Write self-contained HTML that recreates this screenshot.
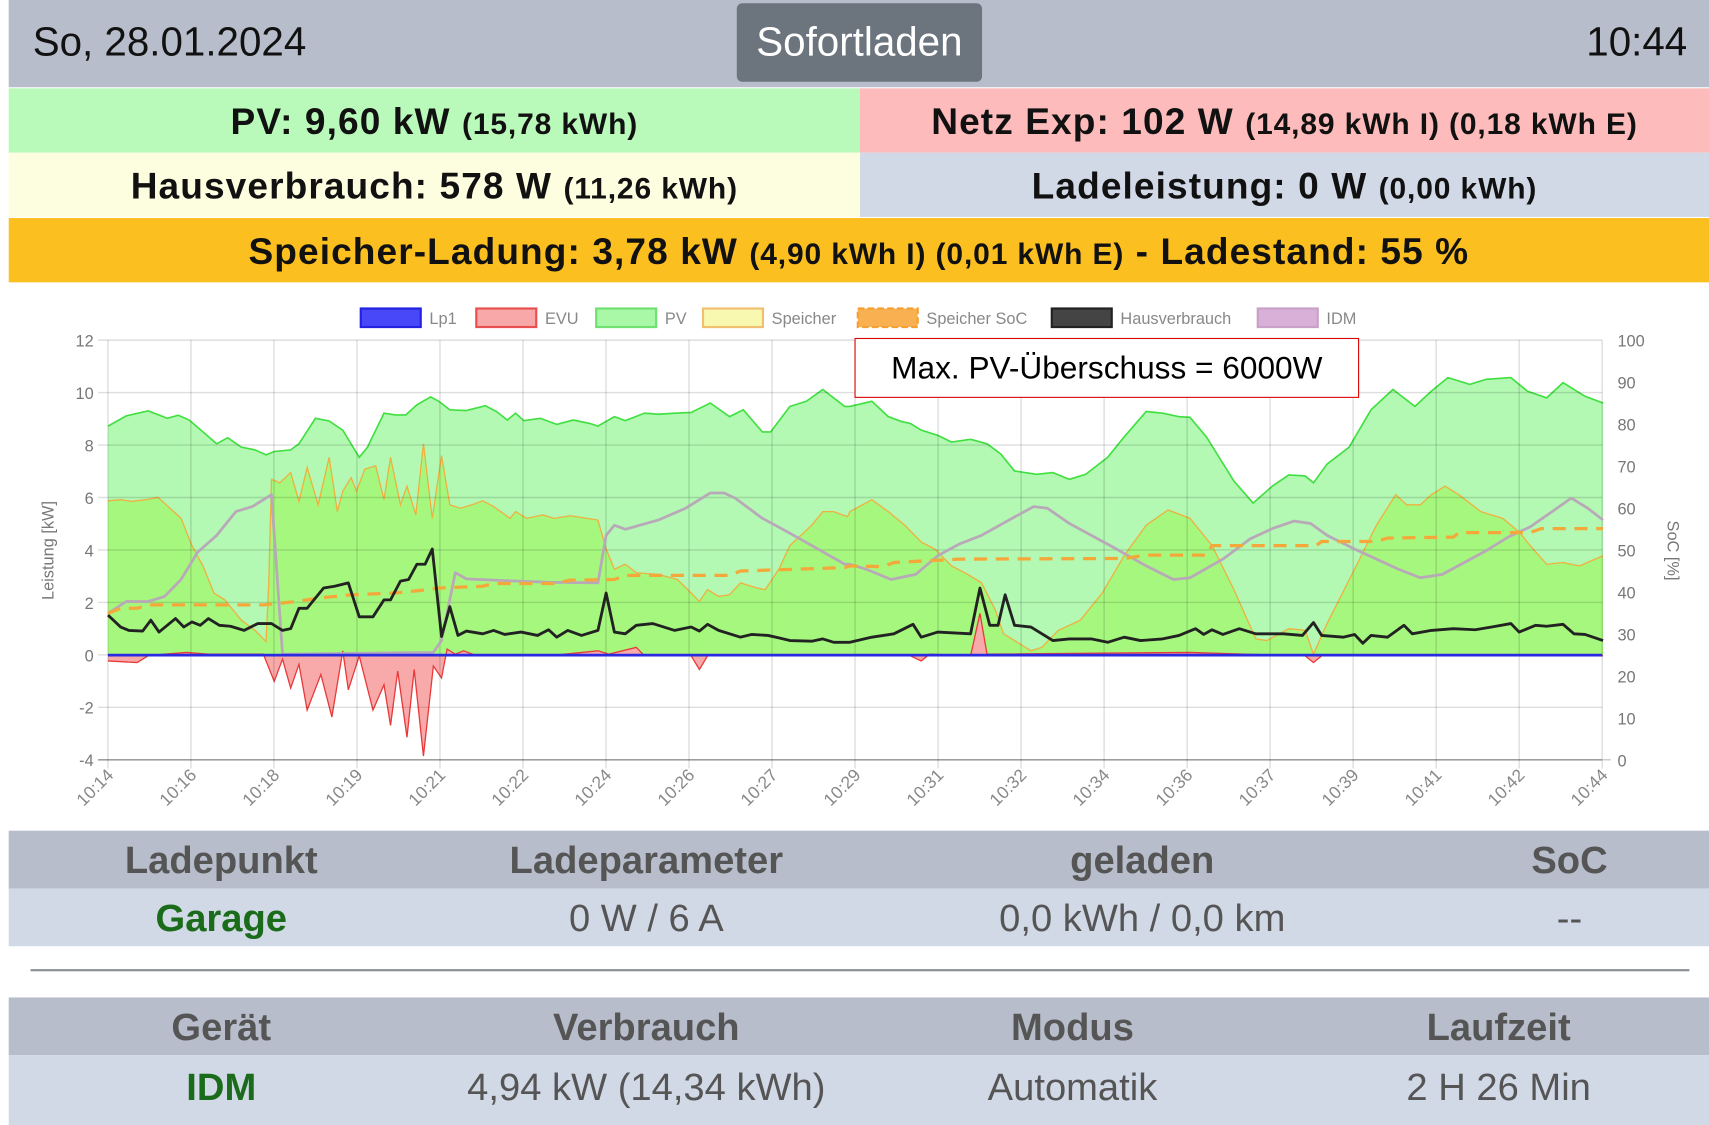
<!DOCTYPE html>
<html><head><meta charset="utf-8"><style>
html,body{margin:0;padding:0;background:#fff;overflow:hidden;width:1709px;height:1125px}
#w{position:absolute;left:0;top:0;width:1568px;height:1032px;transform:scale(1.08993,1.09012);transform-origin:0 0;font-family:"Liberation Sans",sans-serif}
.a{position:absolute}
.hdr{left:8px;top:0;width:1560px;height:80px;background:#b7bdca}
.date{left:30px;top:18px;font-size:37px;color:#111}
.time{right:20px;top:18px;font-size:37px;color:#111}
.btn{left:676px;top:3px;width:225px;height:72px;background:#6c757d;border-radius:5px;color:#fff;font-size:37px;text-align:center;line-height:72px}
.row{height:59px;line-height:62px;text-align:center;font-weight:bold;font-size:34px;letter-spacing:1px;color:#111;white-space:nowrap}
.row small{font-size:27.5px;letter-spacing:0.8px}
.th{font-weight:bold;font-size:35px;color:#555;text-align:center;position:absolute;top:0;line-height:56px}
.td{font-size:35px;color:#555;text-align:center;position:absolute;top:0;line-height:56px}
.g{color:#1a6b1a;font-weight:bold}
</style></head><body><div id="w">
<div class="a hdr"></div>
<div class="a date">So, 28.01.2024</div>
<div class="a btn">Sofortladen</div>
<div class="a time">10:44</div>
<div class="a row" style="left:8px;top:81px;width:781px;background:#b9f9b9">PV: 9,60 kW <small>(15,78 kWh)</small></div>
<div class="a row" style="left:789px;top:81px;width:779px;background:#fdbbbb">Netz Exp: 102 W <small>(14,89 kWh I) (0,18 kWh E)</small></div>
<div class="a row" style="left:8px;top:140px;width:781px;background:#fdfde0">Hausverbrauch: 578 W <small>(11,26 kWh)</small></div>
<div class="a row" style="left:789px;top:140px;width:779px;background:#d1d8e6">Ladeleistung: 0 W <small>(0,00 kWh)</small></div>
<div class="a row" style="left:8px;top:200px;width:1560px;background:#fbbf1f">Speicher-Ladung: 3,78 kW <small>(4,90 kWh I) (0,01 kWh E)</small> - Ladestand: 55 %</div>

<svg class="a" style="left:0;top:0" width="1568" height="1032" viewBox="0 0 1568 1032" id="ch" font-family="Liberation Sans, sans-serif"></svg>

<div class="a" style="left:784px;top:310px;width:461px;height:53px;border:1.5px solid #d00;background:#fff;font-size:29px;text-align:center;line-height:54px;color:#000">Max. PV-Überschuss = 6000W</div>

<div class="a" style="left:8px;top:762px;width:1560px;height:53px;background:#b7bdca">
<div class="th" style="left:0;width:390px">Ladepunkt</div><div class="th" style="left:390px;width:390px">Ladeparameter</div><div class="th" style="left:845px;width:390px">geladen</div><div class="th" style="left:1237px;width:390px">SoC</div></div>
<div class="a" style="left:8px;top:815px;width:1560px;height:53px;background:#d1d8e6">
<div class="td g" style="left:0;width:390px">Garage</div><div class="td" style="left:390px;width:390px">0 W / 6 A</div><div class="td" style="left:845px;width:390px">0,0 kWh / 0,0 km</div><div class="td" style="left:1237px;width:390px">--</div></div>
<div class="a" style="left:28px;top:889px;width:1522px;height:2px;background:#8a8f96"></div>
<div class="a" style="left:8px;top:915px;width:1560px;height:53px;background:#b7bdca">
<div class="th" style="left:0;width:390px">Gerät</div><div class="th" style="left:390px;width:390px">Verbrauch</div><div class="th" style="left:781px;width:390px">Modus</div><div class="th" style="left:1172px;width:390px">Laufzeit</div></div>
<div class="a" style="left:8px;top:968px;width:1560px;height:64px;background:#d1d8e6">
<div class="td g" style="left:0;width:390px;line-height:60px">IDM</div><div class="td" style="left:390px;width:390px;line-height:60px">4,94 kW (14,34 kWh)</div><div class="td" style="left:781px;width:390px;line-height:60px">Automatik</div><div class="td" style="left:1172px;width:390px;line-height:60px">2 H 26 Min</div></div>
</div>
<script>
var S=document.getElementById('ch'),h='';
function P(L,R){var o=[];L.forEach(function(p){var x=p[0]/1.987;if(x<780)o.push([x,601-(1083-p[1])*0.3113]);});R.forEach(function(p){o.push([779.8+p[0]/1.987,601-(1083-p[1])*0.3113]);});return o;}
function pts(a){return a.map(function(p){return p[0].toFixed(1)+','+p[1].toFixed(1)}).join(' ');}
function area(a,f,s,w){var q=a.slice();q.push([q[q.length-1][0],601]);q.unshift([q[0][0],601]);h+='<polygon points="'+pts(q)+'" fill="'+f+'"/>';h+='<polyline points="'+pts(a)+'" fill="none" stroke="'+s+'" stroke-width="'+w+'"/>';}
function line(a,s,w,d){h+='<polyline points="'+pts(a)+'" fill="none" stroke="'+s+'" stroke-width="'+w+'" stroke-linejoin="round"'+(d?' stroke-dasharray="'+d+'"':'')+'/>';}
var pv=P([[197,408],[230,378],[270,363],[305,385],[325,376],[345,390],[370,425],[395,460],[415,442],[440,470],[465,478],[485,493],[500,483],[530,478],[545,460],[575,385],[600,393],[625,420],[655,500],[670,470],[700,370],[720,375],[740,375],[760,345],[785,322],[800,335],[820,360],[850,362],[885,348],[905,365],[925,390],[940,370],[955,392],[985,385],[1015,403],[1045,390],[1075,400],[1090,408],[1120,380],[1140,392],[1175,370],[1200,373],[1230,370],[1260,368],[1295,340],[1330,380],[1355,360],[1390,425],[1405,425],[1440,350],[1470,335],[1500,300],[1540,350]],
[[0,350],[40,335],[70,380],[95,395],[110,400],[130,420],[160,435],[185,455],[220,447],[250,460],[275,490],[300,540],[340,550],[370,545],[400,565],[430,550],[470,500],[500,440],[540,365],[570,370],[600,380],[620,382],[650,440],[700,570],[735,635],[770,585],[800,552],[830,555],[845,575],[870,520],[910,470],[950,360],[990,300],[1030,350],[1060,305],[1090,265],[1130,285],[1160,270],[1205,265],[1235,305],[1270,325],[1300,280],[1340,320],[1373,340]]);
var sp=P([[197,628],[220,625],[240,630],[265,625],[288,618],[310,650],[330,680],[350,760],[370,820],[390,900],[410,920],[440,980],[465,1010],[485,1043],[490,870],[495,565],[510,575],[530,545],[545,630],[560,530],[580,640],[600,500],[615,660],[625,600],[640,560],[650,600],[665,535],[685,525],[700,625],[712,500],[730,640],[742,585],[758,670],[772,460],[788,680],[805,495],[820,640],[840,650],[860,640],[880,628],[900,645],[930,680],[940,660],[960,680],[990,670],[1010,680],[1040,672],[1070,680],[1090,685],[1105,770],[1120,830],[1140,815],[1160,840],[1200,845],[1235,860],[1260,900],[1275,925],[1290,890],[1310,910],[1330,905],[1350,870],[1380,885],[1395,890],[1420,830],[1440,760],[1480,700],[1500,660],[1520,660],[1545,675]],
[[0,660],[40,625],[70,660],[100,700],[130,750],[155,770],[185,820],[215,845],[240,870],[265,950],[280,1020],[300,1040],[330,1070],[350,1060],[380,1010],[420,980],[460,900],[500,790],[540,700],[580,655],[620,680],[660,760],[700,890],[740,1035],[760,1040],[800,1005],[830,1010],[845,1080],[870,990],[920,830],[960,700],[995,610],[1015,640],[1040,640],[1060,610],[1085,585],[1110,610],[1150,660],[1190,680],[1220,720],[1240,760],[1270,815],[1300,810],[1330,820],[1373,790]]);
var evu=P([[197,1100],[250,1105],[270,1085],[300,1080],[340,1075],[380,1080],[480,1080],[500,1160],[515,1095],[530,1180],[545,1110],[560,1245],[585,1140],[605,1265],[625,1070],[635,1185],[655,1085],[680,1245],[700,1170],[712,1290],[725,1130],[742,1325],[755,1125],[772,1380],[790,1115],[805,1150],[815,1065],[830,1080],[845,1070],[870,1085],[1000,1085],[1090,1070],[1110,1080],[1160,1060],[1175,1085],[1260,1085],[1275,1125],[1290,1085],[1540,1085]],
[[0,1085],[110,1085],[130,1100],[145,1080],[220,1085],[237,960],[250,1080],[620,1075],[720,1080],[830,1085],[845,1105],[860,1085],[1373,1085]]);
var hv=P([[197,965],[220,1000],[235,1010],[260,1012],[275,980],[290,1015],[320,975],[335,1000],[350,985],[365,995],[380,975],[400,995],[420,998],[445,1010],[470,990],[495,990],[515,1010],[530,1005],[545,945],[560,945],[590,885],[610,880],[635,870],[655,970],[680,970],[700,920],[712,920],[730,865],[745,860],[760,815],[775,815],[788,770],[805,1028],[820,940],[835,1025],[850,1012],[880,1020],[900,1010],[920,1022],[950,1015],[980,1025],[1000,1008],[1015,1030],[1035,1010],[1060,1025],[1090,1010],[1105,900],[1120,1015],[1140,1020],[1160,995],[1190,990],[1230,1010],[1260,1000],[1275,1012],[1290,992],[1310,1010],[1350,1030],[1370,1022],[1400,1025],[1420,1032],[1440,1040],[1480,1042],[1500,1035],[1520,1045]],
[[0,1045],[40,1030],[80,1020],[115,992],[130,1030],[160,1015],[220,1020],[237,885],[255,995],[270,995],[283,905],[300,995],[330,1000],[370,1040],[400,1035],[440,1035],[470,1045],[500,1030],[530,1040],[570,1035],[600,1025],[630,1005],[645,1022],[660,1008],[680,1022],[710,1005],[740,1020],[790,1020],[825,1025],[845,987],[860,1025],[900,1030],[920,1022],[935,1048],[950,1025],[980,1030],[1010,995],[1025,1020],[1060,1010],[1100,1005],[1140,1008],[1170,1000],[1205,990],[1220,1015],[1250,995],[1270,998],[1300,992],[1320,1020],[1340,1022],[1373,1040]]);
var idm=P([[197,960],[230,925],[270,925],[300,910],[330,860],[360,780],[395,730],[430,660],[460,645],[495,610],[515,1080],[790,1075],[805,1040],[830,840],[850,858],[900,862],[1000,868],[1090,870],[1105,730],[1120,700],[1140,712],[1200,685],[1250,650],[1295,605],[1320,605],[1340,620],[1390,680],[1430,715],[1480,760],[1540,815]],
[[0,815],[30,830],[75,860],[120,845],[160,790],[200,755],[240,730],[290,685],[335,645],[360,650],[400,695],[440,730],[480,765],[540,820],[590,860],[620,855],[680,800],[730,740],[770,710],[810,688],[840,695],[870,730],[920,770],[960,800],[1000,830],[1040,855],[1080,845],[1120,810],[1160,775],[1200,735],[1240,705],[1280,660],[1315,620],[1345,650],[1373,685]]);
var soc=P([[197,960],[220,945],[250,945],[270,935],[480,935],[540,925],[580,915],[640,905],[720,900],[750,895],[780,890],[800,885],[880,880],[900,872],[1010,872],[1040,862],[1120,860],[1140,848],[1330,848],[1350,835],[1540,825]],
[[0,820],[60,822],[80,810],[200,800],[500,798],[540,788],[650,788],[660,760],[850,760],[860,748],[960,748],[980,738],[1100,735],[1110,722],[1240,722],[1260,710],[1373,710]]);
area(pv,'#b3f8b3','#3fe03f',1.5);
area(sp,'#a6f77e','#f0b040',1.2);
area(evu,'#f8aaaa','#e83a3a',1.2);
var g='';for(var i=0;i<=16;i++){var y=312+i*385/16;if(i%2==0)g+='<line x1="90" x2="1470" y1="'+y+'" y2="'+y+'" stroke="rgba(0,0,0,0.13)" stroke-width="1.3"/>';}
for(var i=0;i<=18;i++){var x=99+i*1371/18;g+='<line x1="'+x+'" x2="'+x+'" y1="312" y2="705" stroke="rgba(0,0,0,0.13)" stroke-width="1.3"/>';}
g+='<line x1="90" x2="1470" y1="697" y2="697" stroke="rgba(0,0,0,0.3)" stroke-width="1.5"/><line x1="1470" x2="1478" y1="697" y2="697" stroke="#bbb"/>';
h+=g;
line(idm,'#b8a8b8',2.5);
line(soc,'#f5a83a',3,'12,8');
line(hv,'#222',2.6);
h+='<line x1="99" x2="1470" y1="601" y2="601" stroke="#2a2ae0" stroke-width="2.5"/>';
for(var i=0;i<=8;i++){var v=12-2*i;h+='<text x="86" y="'+(318+i*48.1)+'" font-size="15" fill="#777" text-anchor="end">'+v+'</text>';}
for(var i=0;i<=10;i++){h+='<text x="1484" y="'+(703-i*38.5)+'" font-size="15" fill="#777">'+(i*10)+'</text>';}
h+='<text transform="translate(49,505) rotate(-90)" font-size="15" fill="#777" text-anchor="middle">Leistung [kW]</text>';
h+='<text transform="translate(1530,505) rotate(90)" font-size="15" fill="#777" text-anchor="middle">SoC [%]</text>';
var t=['10:14','10:16','10:18','10:19','10:21','10:22','10:24','10:26','10:27','10:29','10:31','10:32','10:34','10:36','10:37','10:39','10:41','10:42','10:44'];
t.forEach(function(s,i){var x=99+i*1371/18;h+='<text transform="translate('+(x+6)+',712) rotate(-45)" font-size="16" fill="#888" text-anchor="end">'+s+'</text>';});
var lg=[[331,'Lp1','#4848f8','#2222e0'],[437,'EVU','#f8a8a8','#e85050'],[547,'PV','#a8f8a8','#70e070'],[645,'Speicher','#f8f8b0','#f0c070'],[787,'Speicher SoC','#f8b050','#f5a030'],[965,'Hausverbrauch','#444','#222'],[1154,'IDM','#d8b0d8','#c8a0c8']];
lg.forEach(function(l){h+='<rect x="'+l[0]+'" y="283" width="55" height="17" fill="'+l[2]+'" stroke="'+l[3]+'" stroke-width="2"'+(l[1]=='Speicher SoC'?' stroke-dasharray="6,3"':'')+'/><text x="'+(l[0]+63)+'" y="297" font-size="15" fill="#888">'+l[1]+'</text>';});
S.innerHTML=h;
</script>
</body></html>
